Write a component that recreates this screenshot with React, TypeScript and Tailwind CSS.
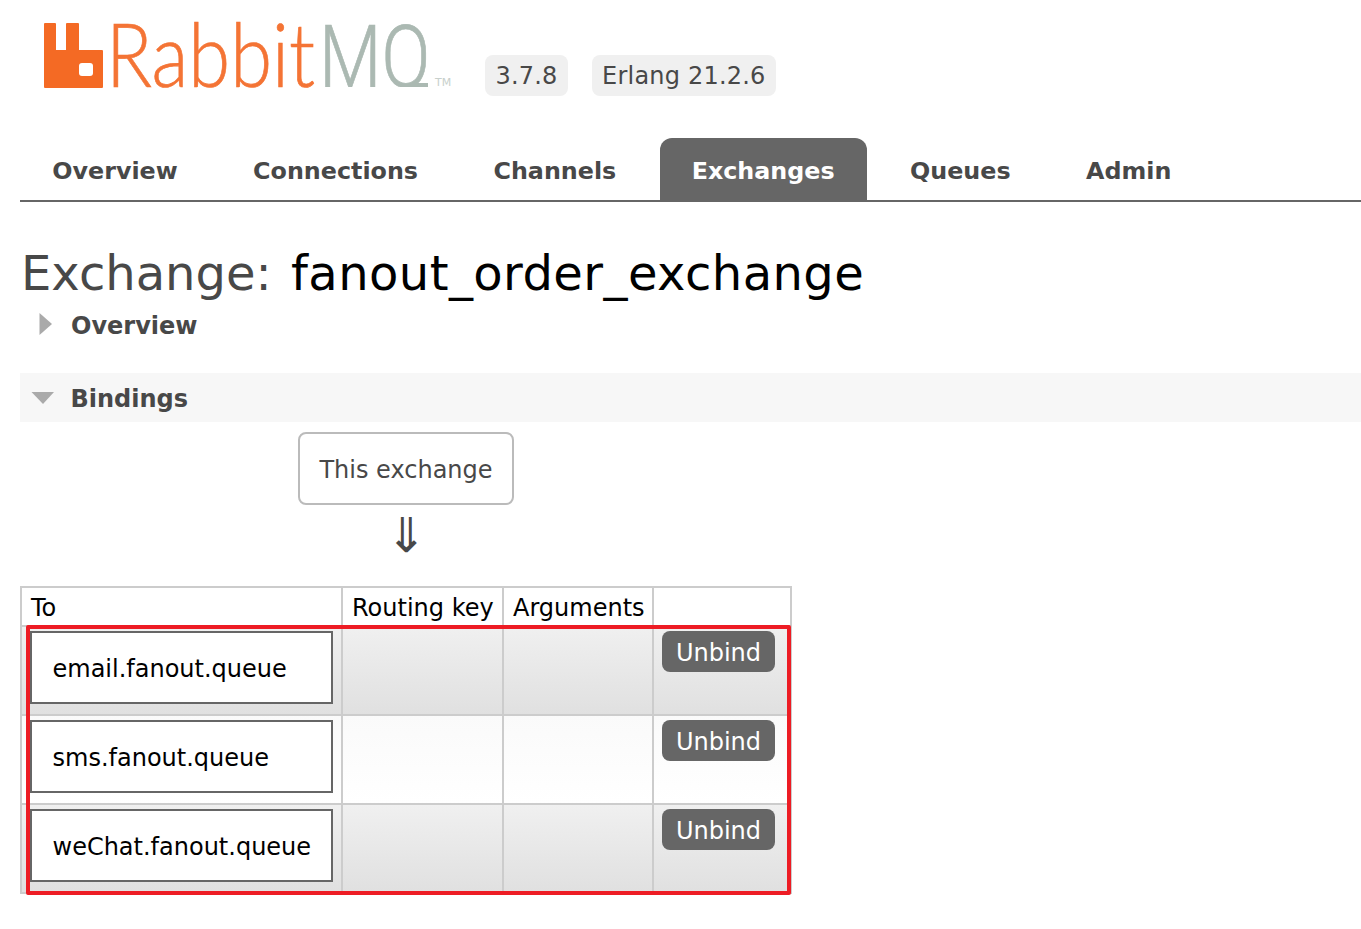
import React from "react";

const tabs = ["Overview", "Connections", "Channels", "Exchanges", "Queues", "Admin"];
const rows = [
  { name: "email.fanout.queue", alt: true },
  { name: "sms.fanout.queue", alt: false },
  { name: "weChat.fanout.queue", alt: true },
];

function Logo() {
  return (
    <div className="relative flex items-start w-[465px] h-[138px] shrink-0">
      <svg width="59" height="65" viewBox="0 0 59 65" className="ml-[24px] mt-[23px] shrink-0">
        <path
          fill="#f46a24"
          d="M0 1a1 1 0 0 1 1-1h10a1 1 0 0 1 1 1v26h10V1a1 1 0 0 1 1-1h11a1 1 0 0 1 1 1v26h23a1 1 0 0 1 1 1v36a1 1 0 0 1-1 1H1a1 1 0 0 1-1-1z"
        />
        <rect x="35" y="40" width="14" height="13" rx="3" fill="#fff" />
      </svg>
      <div className="mt-[5px] ml-[3px] flex items-baseline text-[88px] leading-[96px] whitespace-nowrap [-webkit-text-stroke:0.7px]">
        <span className="inline-block w-[213px] origin-left scale-x-[0.863] font-['Lato',sans-serif] font-light text-[#f47435]">
          Rabbit
        </span>
        <span className="inline-block w-[118px] origin-left scale-x-[0.82] font-['Roboto',sans-serif] font-light text-[#abb9b2] [clip-path:inset(0_-60px_18px_0)]">
          MQ
        </span>
        <span className="text-[11px] leading-none text-[#c8d0cc] ml-[-2px] -translate-y-[1px] [-webkit-text-stroke:0px]">TM</span>
      </div>
      <span className="absolute left-[391px] top-[83px] w-[17px] h-[4px] bg-[#abb9b2]" />
    </div>
  );
}

export default function App() {
  return (
    <div className="min-h-[929px] bg-white pl-5 font-['DejaVu_Sans',sans-serif] text-[#484848] overflow-hidden">
      <header className="flex items-start h-[138px]">
        <Logo />
        <div className="flex gap-6 mt-[55px] text-[24px] leading-[43px] tracking-[0.2px]">
          <span className="px-[10.5px] h-[41px] bg-[#f0f0f0] rounded-lg">3.7.8</span>
          <span className="px-[10px] h-[41px] bg-[#f0f0f0] rounded-lg">Erlang 21.2.6</span>
        </div>
      </header>
      <nav className="flex gap-[11.4px] pl-[0.3px] h-[64px] border-b-2 border-[#666]">
        {tabs.map((t) => (
          <a
            key={t}
            className={
              "px-8 h-[62px] leading-[66px] text-[23.8px] font-bold rounded-t-[12px] " +
              (t === "Exchanges" ? "bg-[#666] text-white" : "")
            }
          >
            {t}
          </a>
        ))}
      </nav>
      <h1 className="mt-[39px] ml-[1px] text-[48px] leading-[64px] font-normal whitespace-nowrap">
        Exchange: <span className="text-black ml-[4px] tracking-[0.43px]">fanout_order_exchange</span>
      </h1>
      <div className="flex items-center h-[48px] -mt-[5px]">
        <svg width="14" height="24" viewBox="0 0 14 24" className="ml-[19px] shrink-0">
          <path d="M0.500 1 L13 12 L0.500 23 Z" fill="#aaa" />
        </svg>
        <h2 className="ml-[18px] pt-[3px] text-[24px] font-bold">Overview</h2>
      </div>
      <div className="flex items-center h-[49px] mt-[25px] bg-[#f7f7f7]">
        <svg width="24" height="14" viewBox="0 0 24 14" className="ml-[11px] shrink-0">
          <path d="M0.500 1 L23 1 L12 13 Z" fill="#aaa" />
        </svg>
        <h2 className="ml-[15.5px] pt-[3px] text-[24px] font-bold">Bindings</h2>
      </div>
      <div className="ml-[278px] mt-[10px] w-[216px] h-[73px] border-2 border-[#bbb] rounded-lg flex items-center justify-center pt-[2px] text-[24px]">
        This exchange
      </div>
      <div className="ml-[278px] w-[216px] h-[81px] text-center text-[48px] leading-[60px]">⇓</div>
      <div className="relative w-[770px]">
        <table className="w-[770px] table-fixed border-collapse border-2 border-[#ccc] text-[24px] text-black">
          <colgroup>
            <col className="w-[321px]" />
            <col className="w-[161px]" />
            <col className="w-[150px]" />
            <col className="w-[138px]" />
          </colgroup>
          <thead>
            <tr className="h-[39px]">
              <th className="border-2 border-[#ccc] pl-[9px] pr-0 pt-[3px] pb-0 font-normal text-left leading-[32px]">To</th>
              <th className="border-2 border-[#ccc] pl-[9px] pr-0 pt-[3px] pb-0 font-normal text-left leading-[32px] whitespace-nowrap">Routing key</th>
              <th className="border-2 border-[#ccc] pl-[9px] pr-0 pt-[3px] pb-0 font-normal text-left leading-[32px]">Arguments</th>
              <th className="border-2 border-[#ccc]"></th>
            </tr>
          </thead>
          <tbody>
            {rows.map((r) => (
              <tr
                key={r.name}
                className={
                  "h-[89px] " +
                  (r.alt
                    ? "bg-gradient-to-b from-[#f0f0f0] to-[#e0e0e0]"
                    : "bg-gradient-to-b from-[#fafafa] to-[#ffffff]")
                }
              >
                <td className="border-2 border-[#ccc] p-0 align-top">
                  <div className="mt-[4px] ml-[8px] w-[303px] h-[73px] border-2 border-[#666] bg-white flex items-center pl-[20.5px] pt-[2px] text-[24px] whitespace-nowrap">
                    {r.name}
                  </div>
                </td>
                <td className="border-2 border-[#ccc]"></td>
                <td className="border-2 border-[#ccc]"></td>
                <td className="border-2 border-[#ccc] p-0 align-top">
                  <div className="mt-[4px] ml-[8px] w-[113px] h-[41px] rounded-lg bg-[#666] text-white text-center leading-[44px]">
                    Unbind
                  </div>
                </td>
              </tr>
            ))}
          </tbody>
        </table>
        <div className="absolute left-[6px] top-[39px] w-[765px] h-[270px] border-4 border-[#ed1c24] rounded-[2px] pointer-events-none" />
      </div>
    </div>
  );
}
